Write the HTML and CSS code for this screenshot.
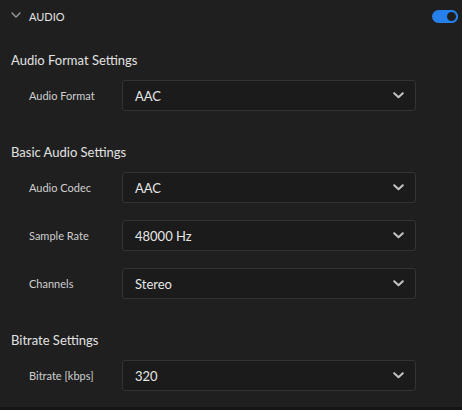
FILE: index.html
```html
<!DOCTYPE html>
<html>
<head>
<meta charset="utf-8">
<link rel="stylesheet" href="styles.css">
</head>
<body>
<div class="panel">
  <div class="header">
    <svg class="hchev" width="10" height="6" viewBox="0 0 10 6"><path d="M1 1 L5 5 L9 1" fill="none" stroke="#9a9a9a" stroke-width="1.4" stroke-linecap="round" stroke-linejoin="round"/></svg>
    <span class="title">AUDIO</span>
    <span class="toggle"><span class="knob"></span></span>
  </div>

  <div class="section">
    <div class="heading">Audio Format Settings</div>
    <div class="row">
      <div class="label">Audio Format</div>
      <div class="select"><span>AAC</span><svg width="11" height="7" viewBox="0 0 11 7"><path d="M1.2 1.2 L5.5 5.3 L9.8 1.2" fill="none" stroke="#c4c4c4" stroke-width="2" stroke-linecap="round" stroke-linejoin="round"/></svg></div>
    </div>
  </div>

  <div class="section">
    <div class="heading">Basic Audio Settings</div>
    <div class="row">
      <div class="label">Audio Codec</div>
      <div class="select"><span>AAC</span><svg width="11" height="7" viewBox="0 0 11 7"><path d="M1.2 1.2 L5.5 5.3 L9.8 1.2" fill="none" stroke="#c4c4c4" stroke-width="2" stroke-linecap="round" stroke-linejoin="round"/></svg></div>
    </div>
    <div class="row">
      <div class="label">Sample Rate</div>
      <div class="select"><span>48000 Hz</span><svg width="11" height="7" viewBox="0 0 11 7"><path d="M1.2 1.2 L5.5 5.3 L9.8 1.2" fill="none" stroke="#c4c4c4" stroke-width="2" stroke-linecap="round" stroke-linejoin="round"/></svg></div>
    </div>
    <div class="row">
      <div class="label">Channels</div>
      <div class="select"><span>Stereo</span><svg width="11" height="7" viewBox="0 0 11 7"><path d="M1.2 1.2 L5.5 5.3 L9.8 1.2" fill="none" stroke="#c4c4c4" stroke-width="2" stroke-linecap="round" stroke-linejoin="round"/></svg></div>
    </div>
  </div>

  <div class="section">
    <div class="heading">Bitrate Settings</div>
    <div class="row">
      <div class="label">Bitrate [kbps]</div>
      <div class="select"><span>320</span><svg width="11" height="7" viewBox="0 0 11 7"><path d="M1.2 1.2 L5.5 5.3 L9.8 1.2" fill="none" stroke="#c4c4c4" stroke-width="2" stroke-linecap="round" stroke-linejoin="round"/></svg></div>
    </div>
  </div>
</div>
</body>
</html>
```

FILE: styles.css
```css
html, body {
  margin: 0;
  padding: 0;
  background: #1f1f1f;
}
body {
  font-family: Lato, "Open Sans", sans-serif;
  color: #d8d8d8;
}
.panel {
  width: 462px;
  height: 407px;
  background: #1f1f1f;
  border-bottom: 3px solid #151515;
  box-sizing: content-box;
}
.header {
  height: 32px;
  display: flex;
  align-items: center;
  padding-left: 11px;
  padding-right: 4px;
}
.hchev {
  margin-right: 8px;
  margin-top: -2px;
}
.title {
  font-size: 11px;
  color: #e4e4e4;
  flex: 1;
}
.toggle {
  width: 26px;
  height: 13px;
  border-radius: 7px;
  background: #2680eb;
  position: relative;
}
.knob {
  position: absolute;
  right: 0;
  top: 0;
  width: 9px;
  height: 9px;
  border-radius: 50%;
  background: #1e1e1e;
  border: 2px solid #2680eb;
}
.section {
  padding-top: 18px;
}
.section + .section {
  padding-top: 31px;
}
.heading {
  height: 20px;
  line-height: 20px;
  font-size: 13px;
  color: #e2e2e2;
  padding-left: 11px;
  margin-bottom: 10px;
}
.row {
  display: flex;
  align-items: center;
  height: 31px;
}
.row + .row {
  margin-top: 17px;
}
.label {
  width: 93px;
  padding-left: 29px;
  font-size: 11px;
  color: #cfcfcf;
}
.select {
  width: 294px;
  height: 31px;
  box-sizing: border-box;
  border: 1px solid #333333;
  border-radius: 3px;
  background: #1b1b1b;
  display: flex;
  align-items: center;
  justify-content: space-between;
  padding-left: 12px;
  padding-right: 11px;
  font-size: 13px;
  color: #e6e6e6;
}
```
